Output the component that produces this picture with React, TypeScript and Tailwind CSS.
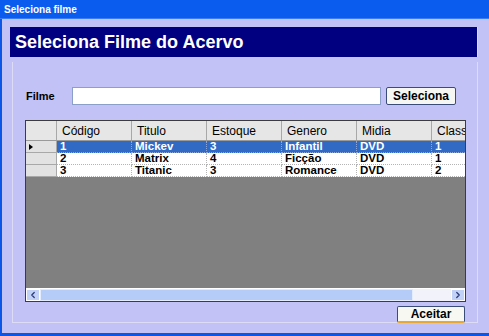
import { ChevronLeft, ChevronRight } from 'lucide-react';

const COLUMNS = ['Código', 'Titulo', 'Estoque', 'Genero', 'Midia', 'Classificação'];

const ROWS = [
  ['1', 'Mickev', '3', 'Infantil', 'DVD', '1'],
  ['2', 'Matrix', '4', 'Ficção', 'DVD', '1'],
  ['3', 'Titanic', '3', 'Romance', 'DVD', '2'],
];

const font = { fontFamily: '"Liberation Sans", Arial, sans-serif' };

function Grid() {
  return (
    <div className="flex h-[182px] w-[441px] flex-col overflow-hidden border border-[#3c3c3c] bg-[#808080]">
      {/* header */}
      <div className="flex h-[20px] shrink-0 border-b border-[#9a9a9a] bg-[#e6e6e6]">
        <div className="w-[31px] shrink-0 border-r border-[#a8a8a8]" />
        {COLUMNS.map(c => (
          <div
            key={c}
            className="flex w-[75px] shrink-0 items-center overflow-hidden whitespace-nowrap border-r border-[#a8a8a8] pl-[5px] text-[12px] text-black"
          >
            {c}
          </div>
        ))}
      </div>

      {/* rows */}
      {ROWS.map((row, r) => {
        const selected = r === 0;
        return (
          <div key={r} className="flex h-[12px] shrink-0">
            <div className="flex w-[31px] shrink-0 items-center border-b border-r border-[#a8a8a8] bg-[#e2e2e2] pl-[3px]">
              {selected && (
                <span className="h-0 w-0 border-y-[3px] border-l-[4px] border-y-transparent border-l-black" />
              )}
            </div>
            {row.map((cell, c) => (
              <div
                key={c}
                className={
                  'w-[75px] shrink-0 overflow-hidden whitespace-nowrap border-b border-r border-dotted pl-[3px] text-[11.5px] font-bold leading-[11px] ' +
                  (selected
                    ? 'border-[#8aa6dc] bg-[#316ac5] text-white'
                    : 'border-[#b4b4b4] bg-white text-black')
                }
              >
                {cell}
              </div>
            ))}
          </div>
        );
      })}

      <div className="flex-1" />

      {/* horizontal scrollbar */}
      <div className="flex h-[13px] shrink-0 border-t border-white bg-[#f2f2fa]">
        <div className="flex w-[14px] shrink-0 items-center justify-center border border-white bg-[#c2d2f6] text-[#2a3c78]">
          <ChevronLeft size={10} strokeWidth={3} />
        </div>
        <div className="w-[373px] shrink-0 border border-[#e4ecfc] bg-[#b6ccf8]" />
        <div className="flex-1" />
        <div className="flex w-[14px] shrink-0 items-center justify-center border border-white bg-[#c2d2f6] text-[#2a3c78]">
          <ChevronRight size={10} strokeWidth={3} />
        </div>
      </div>
    </div>
  );
}

export default function App() {
  return (
    <div className="flex h-[336px] w-[489px] flex-col overflow-hidden bg-[#0b56e6]" style={font}>
      {/* title bar */}
      <div className="flex h-[19px] shrink-0 items-center border-b border-[#3a7cf4] bg-[#0a5cef] pl-[4px] text-[10px] font-bold text-white">
        Seleciona filme
      </div>

      <div className="ml-[2px] mb-[3px] flex flex-1 flex-col bg-[#c2c2f6]">
        {/* banner */}
        <div className="ml-[8px] mt-[8px] flex h-[30px] w-[468px] items-center border-r border-[#d8d8f0] bg-[#000080] pl-[5px] text-[18px] font-bold text-white">
          Seleciona Filme do Acervo
        </div>

        {/* group */}
        <div className="ml-[10px] mt-[5px] flex h-[261px] w-[466px] flex-col border-x border-b border-[#dcdcf4]">
          <div className="mt-[25px] flex items-center">
            <span className="ml-[13px] w-[46px] text-[11px] font-bold text-black">Filme</span>
            <div className="h-[18px] w-[309px] border border-[#8aa0c8] bg-white" />
            <button className="ml-[5px] h-[18px] w-[70px] rounded-[2px] border border-[#3c4c78] bg-[#f6f6f2] text-[12px] font-bold leading-none text-black">
              Seleciona
            </button>
          </div>

          <div className="ml-[12px] mt-[15px]">
            <Grid />
          </div>

          <div className="mr-[12px] mt-[4px] flex justify-end">
            <button className="h-[17px] w-[68px] rounded-[2px] border border-[#3c4c78] border-b-2 border-b-[#e8a838] bg-[#f8f8f2] text-[12px] font-bold leading-none text-black">
              Aceitar
            </button>
          </div>
        </div>
      </div>
    </div>
  );
}
